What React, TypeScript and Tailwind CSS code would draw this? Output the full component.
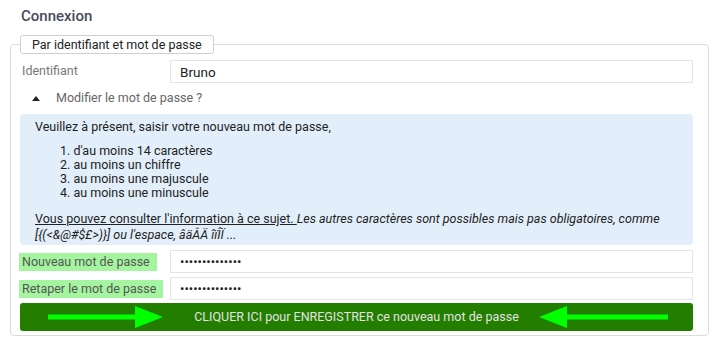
import React from 'react';

const ArrowRight: React.FC = () => (
  <svg width="115" height="22" viewBox="0 0 115 22" className="shrink-0">
    <rect x="0" y="8.5" width="88" height="5" fill="#00ff00" />
    <polygon points="87,0 115,11 87,22" fill="#00ff00" />
  </svg>
);

const ArrowLeft: React.FC = () => (
  <svg width="129" height="22" viewBox="0 0 129 22" className="shrink-0">
    <polygon points="0,11 28,0 28,22" fill="#00ff00" />
    <rect x="27" y="8.5" width="102" height="5" fill="#00ff00" />
  </svg>
);

export default function App() {
  return (
    <div className="w-[719px] h-[340px] bg-white px-[10px] pt-[7px] font-['Roboto',sans-serif] overflow-hidden">
      {/* Title */}
      <h2 className="pl-[11px] text-[15px] font-medium leading-[18px] text-[#4a4a5c]">Connexion</h2>

      <fieldset className="mt-[10px] border border-[#dcdcdc] rounded-[4px] pl-[9px] pr-[15px] pb-[4px]">
        <legend className="h-[19px] px-[11px] border border-[#cfcfcf] rounded-[3px] bg-white text-[12.5px] leading-[17px] text-[#222]">
          Par identifiant et mot de passe
        </legend>

        {/* Login */}
        <div className="mt-[6px] flex items-center">
          <label className="w-[150px] pl-[2px] text-[12.5px] text-[#777]">Identifiant</label>
          <input
            type="text"
            readOnly
            value="Bruno"
            className="flex-1 h-[23px] border border-[#e5e5e5] pl-[9px] text-[13.5px] text-[#222] outline-none"
          />
        </div>

        {/* Toggle */}
        <div className="h-[31px] flex items-center">
          <svg width="8" height="5" viewBox="0 0 8 5" className="ml-[12px]">
            <polygon points="0,5 4,0 8,5" fill="#222" />
          </svg>
          <span className="ml-[16px] text-[12.5px] text-[#666]">Modifier le mot de passe ?</span>
        </div>

        {/* Info box */}
        <div className="rounded-[4px] bg-[#e2effb] pl-[15px] pr-[4px] pt-[6px] pb-[2px] text-[12.5px] text-[#222]">
          <p className="leading-[14px]">Veuillez à présent, saisir votre nouveau mot de passe,</p>
          <ol className="mt-[10px] ml-[25px] list-decimal list-inside leading-[14px]">
            <li>d'au moins 14 caractères</li>
            <li>au moins un chiffre</li>
            <li>au moins une majuscule</li>
            <li>au moins une minuscule</li>
          </ol>
          <p className="mt-[11px] leading-[16px] whitespace-nowrap">
            <span className="underline">Vous pouvez consulter l'information à ce sujet. </span>
            <em>
              Les autres caractères sont possibles mais pas obligatoires, comme
              <br />
              [{'{'}(&lt;&amp;@#$£&gt;){'}'}] ou l'espace, âäÂÄ îïÎÏ ...
            </em>
          </p>
        </div>

        {/* New password */}
        <div className="mt-[4px] flex items-center">
          <div className="w-[150px]">
            <span className="-ml-px inline-block bg-[#a5f5a0] pl-[3px] pr-[7px] text-[12.5px] leading-[18px] text-[#555]">
              Nouveau mot de passe
            </span>
          </div>
          <input
            type="password"
            readOnly
            value="abcdefghijklmn"
            className="flex-1 h-[23px] border border-[#e5e5e5] pl-[9px] text-[13px] text-[#222] outline-none"
          />
        </div>

        <div className="mt-[3px] flex items-center">
          <div className="w-[150px]">
            <span className="-ml-px inline-block bg-[#a5f5a0] pl-[3px] pr-[7px] text-[12.5px] leading-[18px] text-[#555]">
              Retaper le mot de passe
            </span>
          </div>
          <input
            type="password"
            readOnly
            value="abcdefghijklmn"
            className="flex-1 h-[23px] border border-[#e5e5e5] pl-[9px] text-[13px] text-[#222] outline-none"
          />
        </div>

        {/* Submit */}
        <button className="mt-[3px] w-full h-[28px] flex items-center rounded-[3px] bg-[#237e00]">
          <span className="ml-[28px]">
            <ArrowRight />
          </span>
          <span className="flex-1 pl-[11px] text-center text-[12.5px] text-[#e2e2e2]">
            CLIQUER ICI pour ENREGISTRER ce nouveau mot de passe
          </span>
          <span className="mr-[25px]">
            <ArrowLeft />
          </span>
        </button>
      </fieldset>
    </div>
  );
}
